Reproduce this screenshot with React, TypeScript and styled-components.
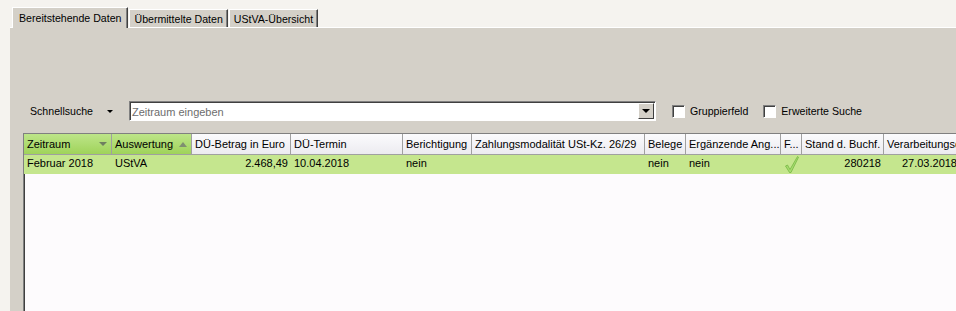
import * as React from "react";
import styled, { createGlobalStyle } from "styled-components";

const GlobalStyle = createGlobalStyle`
    html, body {
        margin: 0;
        padding: 0;
        background: #f5f3ef;
        font-family: "Liberation Sans", Arial, sans-serif;
        font-size: 11px;
        color: #000000;
    }
`;

const Page = styled.div`
    width: 956px;
    height: 311px;
    overflow: hidden;
    padding: 7px 0 0 10px;
    box-sizing: border-box;
    display: flex;
    flex-direction: column;
`;

const TabStrip = styled.div`
    display: flex;
    align-items: flex-end;
    height: 20px;
    padding-left: 2px;
    position: relative;
    z-index: 1;
    font-size: 10.6px;
`;

const Tab = styled.div<{ $active?: boolean }>`
    height: ${(p) => (p.$active ? "21px" : "18px")};
    margin-bottom: ${(p) => (p.$active ? "-1px" : "0")};
    padding: 0 ${(p) => (p.$active ? "6px" : "4px")};
    box-sizing: border-box;
    display: flex;
    align-items: center;
    background: #d4d0c8;
    border-top: 1px solid #ffffff;
    border-left: 1px solid #ffffff;
    border-right: 1px solid #404040;
    box-shadow: inset -1px 0 0 #808080;
    margin-right: 1px;
    white-space: nowrap;
`;

const Panel = styled.div`
    flex: 1;
    background: #d4d0c8;
    border-top: 1px solid #ffffff;
    display: flex;
    flex-direction: column;
    padding-left: 13px;
`;

const Toolbar = styled.div`
    display: flex;
    align-items: center;
    height: 20px;
    margin-top: 73px;
    margin-bottom: 12px;
    font-size: 10.6px;
`;

const Label = styled.span`
    padding-left: 7px;
    width: 77px;
`;

const SmallArrow = styled.span`
    width: 0;
    height: 0;
    border-left: 3px solid transparent;
    border-right: 3px solid transparent;
    border-top: 3px solid #000000;
    margin-right: 16px;
`;

const Combo = styled.div`
    width: 527px;
    height: 20px;
    box-sizing: border-box;
    background: #ffffff;
    border-top: 1px solid #808080;
    border-left: 1px solid #808080;
    border-right: 1px solid #ffffff;
    border-bottom: 1px solid #ffffff;
    box-shadow: inset 1px 1px 0 #404040;
    display: flex;
    align-items: center;
`;

const ComboText = styled.span`
    flex: 1;
    color: #6d6d6d;
    padding-left: 2px;
    padding-top: 1px;
    font-size: 11px;
`;

const ComboButton = styled.div`
    width: 16px;
    height: 16px;
    margin-right: 1px;
    box-sizing: border-box;
    background: #d4d0c8;
    border-top: 1px solid #ffffff;
    border-left: 1px solid #ffffff;
    border-right: 1px solid #404040;
    border-bottom: 1px solid #404040;
    display: flex;
    align-items: center;
    justify-content: center;

    &::after {
        content: "";
        border-left: 4px solid transparent;
        border-right: 4px solid transparent;
        border-top: 4px solid #000000;
    }
`;

const Check = styled.label`
    display: flex;
    align-items: center;
    margin-left: 16px;
    gap: 5px;

    & + & {
        margin-left: 15px;
    }
`;

const Box = styled.span`
    width: 13px;
    height: 13px;
    box-sizing: border-box;
    background: #ffffff;
    border-top: 1px solid #808080;
    border-left: 1px solid #808080;
    border-right: 1px solid #ffffff;
    border-bottom: 1px solid #ffffff;
    box-shadow: inset 1px 1px 0 #404040;
`;

const Grid = styled.div`
    flex: 1;
    background: #fdfbfd;
    border-left: 1px solid #808080;
    border-top: 1px solid #808080;
    box-shadow: inset 1px 0 0 #404040;
    overflow: hidden;
`;

const HeaderRow = styled.div`
    display: flex;
    height: 20px;
    border-bottom: 1px solid #a0a0a0;
`;

const HeaderCell = styled.div<{ $w: number; $green?: boolean }>`
    flex: 0 0 ${(p) => p.$w}px;
    box-sizing: border-box;
    display: flex;
    align-items: center;
    padding: 0 3px;
    border-right: 1px solid #a0a0a0;
    background: ${(p) =>
        p.$green
            ? "linear-gradient(#bde589, #9fd35a)"
            : "linear-gradient(#fbfbfd, #ecebf0)"};
    white-space: nowrap;
    overflow: hidden;
`;

const HeaderText = styled.span`
    flex: 1;
`;

const FilterArrow = styled.span`
    border-left: 4px solid transparent;
    border-right: 4px solid transparent;
    border-top: 4px solid #6f7f60;
    margin-right: 1px;
`;

const SortArrow = styled.span`
    border-left: 4px solid transparent;
    border-right: 4px solid transparent;
    border-bottom: 5px solid #7f8f70;
    margin-right: 1px;
`;

const DataRow = styled.div`
    display: flex;
    height: 19px;
    background: #c5e68e;
`;

const Cell = styled.div<{ $w: number; $right?: boolean; $center?: boolean }>`
    flex: 0 0 ${(p) => p.$w}px;
    box-sizing: border-box;
    display: flex;
    align-items: center;
    justify-content: ${(p) => (p.$right ? "flex-end" : p.$center ? "center" : "flex-start")};
    padding: 0 3px 3px;
    white-space: nowrap;
    overflow: hidden;
`;

interface Column {
    title: string;
    width: number;
    green?: boolean;
    marker?: "filter" | "sort";
}

const columns: Column[] = [
    { title: "Zeitraum", width: 88, green: true, marker: "filter" },
    { title: "Auswertung", width: 80, green: true, marker: "sort" },
    { title: "DÜ-Betrag in Euro", width: 99 },
    { title: "DÜ-Termin", width: 112 },
    { title: "Berichtigung", width: 69 },
    { title: "Zahlungsmodalität USt-Kz. 26/29", width: 173 },
    { title: "Belege", width: 41 },
    { title: "Ergänzende  Ang...", width: 95 },
    { title: "F...", width: 21 },
    { title: "Stand d. Buchf.", width: 82 },
    { title: "Verarbeitungsdatum", width: 76 },
];

function Tick(): JSX.Element {
    return (
        <svg width="14" height="17" viewBox="0 0 14 17" style={{ marginTop: 3 }}>
            <path
                d="M0.5 10 L2.5 9 L5 13.5 L12.5 0.5 L13.5 1.2 L6 16.5 L4.5 16.5 Z"
                fill="#a6dc6e"
                stroke="#6fb23e"
                strokeWidth="0.7"
            />
        </svg>
    );
}

export default function App(): JSX.Element {
    const w = columns.map((c) => c.width);
    return (
        <>
            <GlobalStyle />
            <Page>
                <TabStrip>
                    <Tab $active>Bereitstehende Daten</Tab>
                    <Tab>Übermittelte Daten</Tab>
                    <Tab>UStVA-Übersicht</Tab>
                </TabStrip>
                <Panel>
                    <Toolbar>
                        <Label>Schnellsuche</Label>
                        <SmallArrow />
                        <Combo>
                            <ComboText>Zeitraum eingeben</ComboText>
                            <ComboButton />
                        </Combo>
                        <Check>
                            <Box />
                            Gruppierfeld
                        </Check>
                        <Check>
                            <Box />
                            Erweiterte Suche
                        </Check>
                    </Toolbar>
                    <Grid>
                        <HeaderRow>
                            {columns.map((c) => (
                                <HeaderCell key={c.title} $w={c.width} $green={c.green}>
                                    <HeaderText>{c.title}</HeaderText>
                                    {c.marker === "filter" && <FilterArrow />}
                                    {c.marker === "sort" && <SortArrow />}
                                </HeaderCell>
                            ))}
                        </HeaderRow>
                        <DataRow>
                            <Cell $w={w[0]}>Februar 2018</Cell>
                            <Cell $w={w[1]}>UStVA</Cell>
                            <Cell $w={w[2]} $right>2.468,49</Cell>
                            <Cell $w={w[3]}>10.04.2018</Cell>
                            <Cell $w={w[4]}>nein</Cell>
                            <Cell $w={w[5]} />
                            <Cell $w={w[6]}>nein</Cell>
                            <Cell $w={w[7]}>nein</Cell>
                            <Cell $w={w[8]} $center>
                                <Tick />
                            </Cell>
                            <Cell $w={w[9]} $right>280218</Cell>
                            <Cell $w={w[10]} $right>27.03.2018</Cell>
                        </DataRow>
                    </Grid>
                </Panel>
            </Page>
        </>
    );
}
